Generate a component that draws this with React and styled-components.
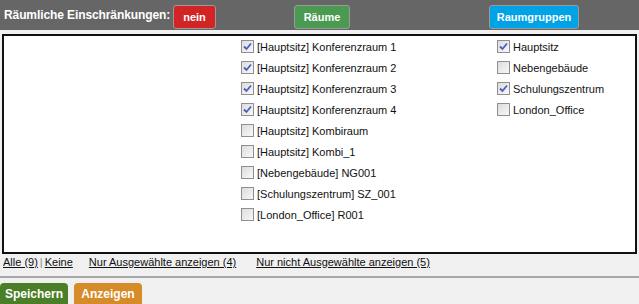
import React from 'react';
import styled, { createGlobalStyle } from 'styled-components';

const Global = createGlobalStyle`
    * {
        box-sizing: border-box;
    }
    body {
        margin: 0;
        background: #f0f0f0;
        font-family: "Liberation Sans", Arial, sans-serif;
        overflow: hidden;
    }
`;

const Header = styled.div`
    height: 30px;
    background: #666666;
    display: grid;
    grid-template-columns: 173px 121px 195px auto;
    align-items: center;
`;

const Label = styled.div`
    color: #fff;
    font-weight: bold;
    font-size: 12px;
    letter-spacing: -0.1px;
    padding-left: 4px;
`;

const HeadBtn = styled.div`
    justify-self: start;
    width: ${p => p.w}px;
    height: 24px;
    margin-top: 3px;
    background: ${p => p.bg};
    border: 1px solid #9a9a9a;
    border-radius: 3px;
    color: #fff;
    font-size: 11px;
    font-weight: bold;
    display: flex;
    align-items: center;
    justify-content: center;
    cursor: pointer;
`;

const Box = styled.div`
    margin: 4px 2px 0 2px;
    height: 220px;
    background: #fff;
    border: 2px solid #111;
    display: grid;
    grid-template-columns: 237px 256px auto;
    padding-top: 4px;
`;

const Column = styled.div`
    display: flex;
    flex-direction: column;
    gap: 8px;
`;

const Item = styled.label`
    display: flex;
    align-items: center;
    gap: 2px;
    height: 13px;
    font-size: 11px;
    color: #111;
`;

const Check = styled.span`
    width: 13px;
    height: 13px;
    border: 1px solid #8f8f8f;
    background: linear-gradient(135deg, #dcdcdc, #f8f8f8);
    display: flex;
    align-items: center;
    justify-content: center;
    margin-right: 1px;
`;

const Links = styled.div`
    display: flex;
    align-items: center;
    height: 16px;
    padding-left: 3px;
    font-size: 11px;
    color: #111;
`;

const Link = styled.a`
    color: #111;
    text-decoration: underline;
    margin-left: ${p => p.ml || 0}px;
    cursor: pointer;
`;

const Sep = styled.span`
    color: #888;
    margin: 0 2px;
`;

const Rule = styled.div`
    margin-top: 6px;
    border-top: 2px solid #a8a8a8;
`;

const Footer = styled.div`
    display: flex;
    gap: 6px;
    padding-top: 5px;
`;

const FootBtn = styled.div`
    width: ${p => p.w}px;
    height: 22px;
    background: ${p => p.bg};
    border-radius: 4px 4px 0 0;
    color: #fff;
    font-size: 12px;
    font-weight: bold;
    display: flex;
    align-items: center;
    justify-content: center;
    cursor: pointer;
`;

const rooms = [
    ['[Hauptsitz] Konferenzraum 1', true],
    ['[Hauptsitz] Konferenzraum 2', true],
    ['[Hauptsitz] Konferenzraum 3', true],
    ['[Hauptsitz] Konferenzraum 4', true],
    ['[Hauptsitz] Kombiraum', false],
    ['[Hauptsitz] Kombi_1', false],
    ['[Nebengebäude] NG001', false],
    ['[Schulungszentrum] SZ_001', false],
    ['[London_Office] R001', false],
];

const groups = [
    ['Hauptsitz', true],
    ['Nebengebäude', false],
    ['Schulungszentrum', true],
    ['London_Office', false],
];

function Box13({ checked }) {
    return (
        <Check>
            {checked && (
                <svg width="9" height="9" viewBox="0 0 9 9">
                    <path d="M1 4.5 L3.5 7 L8 1.5" fill="none" stroke="#4a5fc0" strokeWidth="1.8" />
                </svg>
            )}
        </Check>
    );
}

function List({ items }) {
    return (
        <Column>
            {items.map(([name, checked]) => (
                <Item key={name}>
                    <Box13 checked={checked} />
                    {name}
                </Item>
            ))}
        </Column>
    );
}

export default function App() {
    return (
        <div>
            <Global />
            <Header>
                <Label>Räumliche Einschränkungen:</Label>
                <HeadBtn w={43} bg="#d22424">nein</HeadBtn>
                <HeadBtn w={56} bg="#4a9a52">Räume</HeadBtn>
                <HeadBtn w={90} bg="#00a3e6">Raumgruppen</HeadBtn>
            </Header>
            <Box>
                <div />
                <List items={rooms} />
                <List items={groups} />
            </Box>
            <Links>
                <Link>Alle (9)</Link>
                <Sep>|</Sep>
                <Link>Keine</Link>
                <Link ml={16}>Nur Ausgewählte anzeigen (4)</Link>
                <Link ml={20}>Nur nicht Ausgewählte anzeigen (5)</Link>
            </Links>
            <Rule />
            <Footer>
                <FootBtn w={68} bg="#4b7f27">Speichern</FootBtn>
                <FootBtn w={68} bg="#d58b27">Anzeigen</FootBtn>
            </Footer>
        </div>
    );
}
